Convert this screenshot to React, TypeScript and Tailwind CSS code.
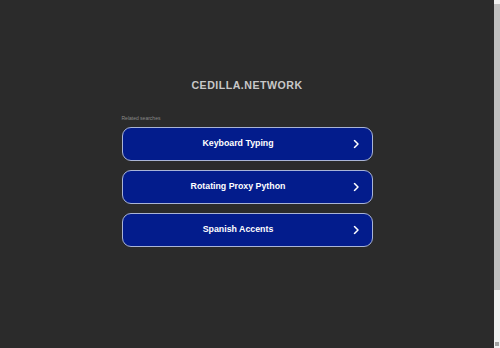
import React from 'react';

const searches = ['Keyboard Typing', 'Rotating Proxy Python', 'Spanish Accents'];

function Chevron() {
  return (
    <svg width="7" height="9" viewBox="0 0 7 9" fill="none" className="shrink-0">
      <path d="M1.5 1 L5 4.5 L1.5 8" stroke="white" strokeWidth="1.5" strokeLinecap="round" strokeLinejoin="round" />
    </svg>
  );
}

export default function App() {
  return (
    <div className="h-screen w-full flex bg-[#2b2b2b]" style={{ fontFamily: '"Liberation Sans", Arial, sans-serif' }}>
      <div className="flex-1 flex flex-col items-center">
        <h1 className="mt-[78px] text-[10.6px] font-bold tracking-[0.5px] text-[#c8c8c8]">
          CEDILLA.NETWORK
        </h1>
        <div className="mt-[22px] w-[251px] flex flex-col">
          <span className="text-[5px] text-[#8a8a8a] mb-[6px] leading-none">Related searches</span>
          <div className="flex flex-col gap-[9px]">
            {searches.map((s) => (
              <a
                key={s}
                href="#"
                className="relative h-[34px] pr-[18px] rounded-[9px] border border-[#a9b4d6] bg-[#031c8c] flex items-center justify-center text-white"
              >
                <span className="text-[8.8px] font-bold">{s}</span>
                <span className="absolute right-[12px] top-1/2 -translate-y-1/2 flex">
                  <Chevron />
                </span>
              </a>
            ))}
          </div>
        </div>
      </div>
      <div className="w-[6px] h-full bg-[#f1f1f1] flex flex-col">
        <div className="h-[4px]" />
        <div className="h-[286px] bg-[#c1c1c1]" />
        <div className="flex-1" />
        <div className="h-[4px] bg-[#a3a3a3] mx-[1px] mb-[2px]" />
      </div>
    </div>
  );
}
